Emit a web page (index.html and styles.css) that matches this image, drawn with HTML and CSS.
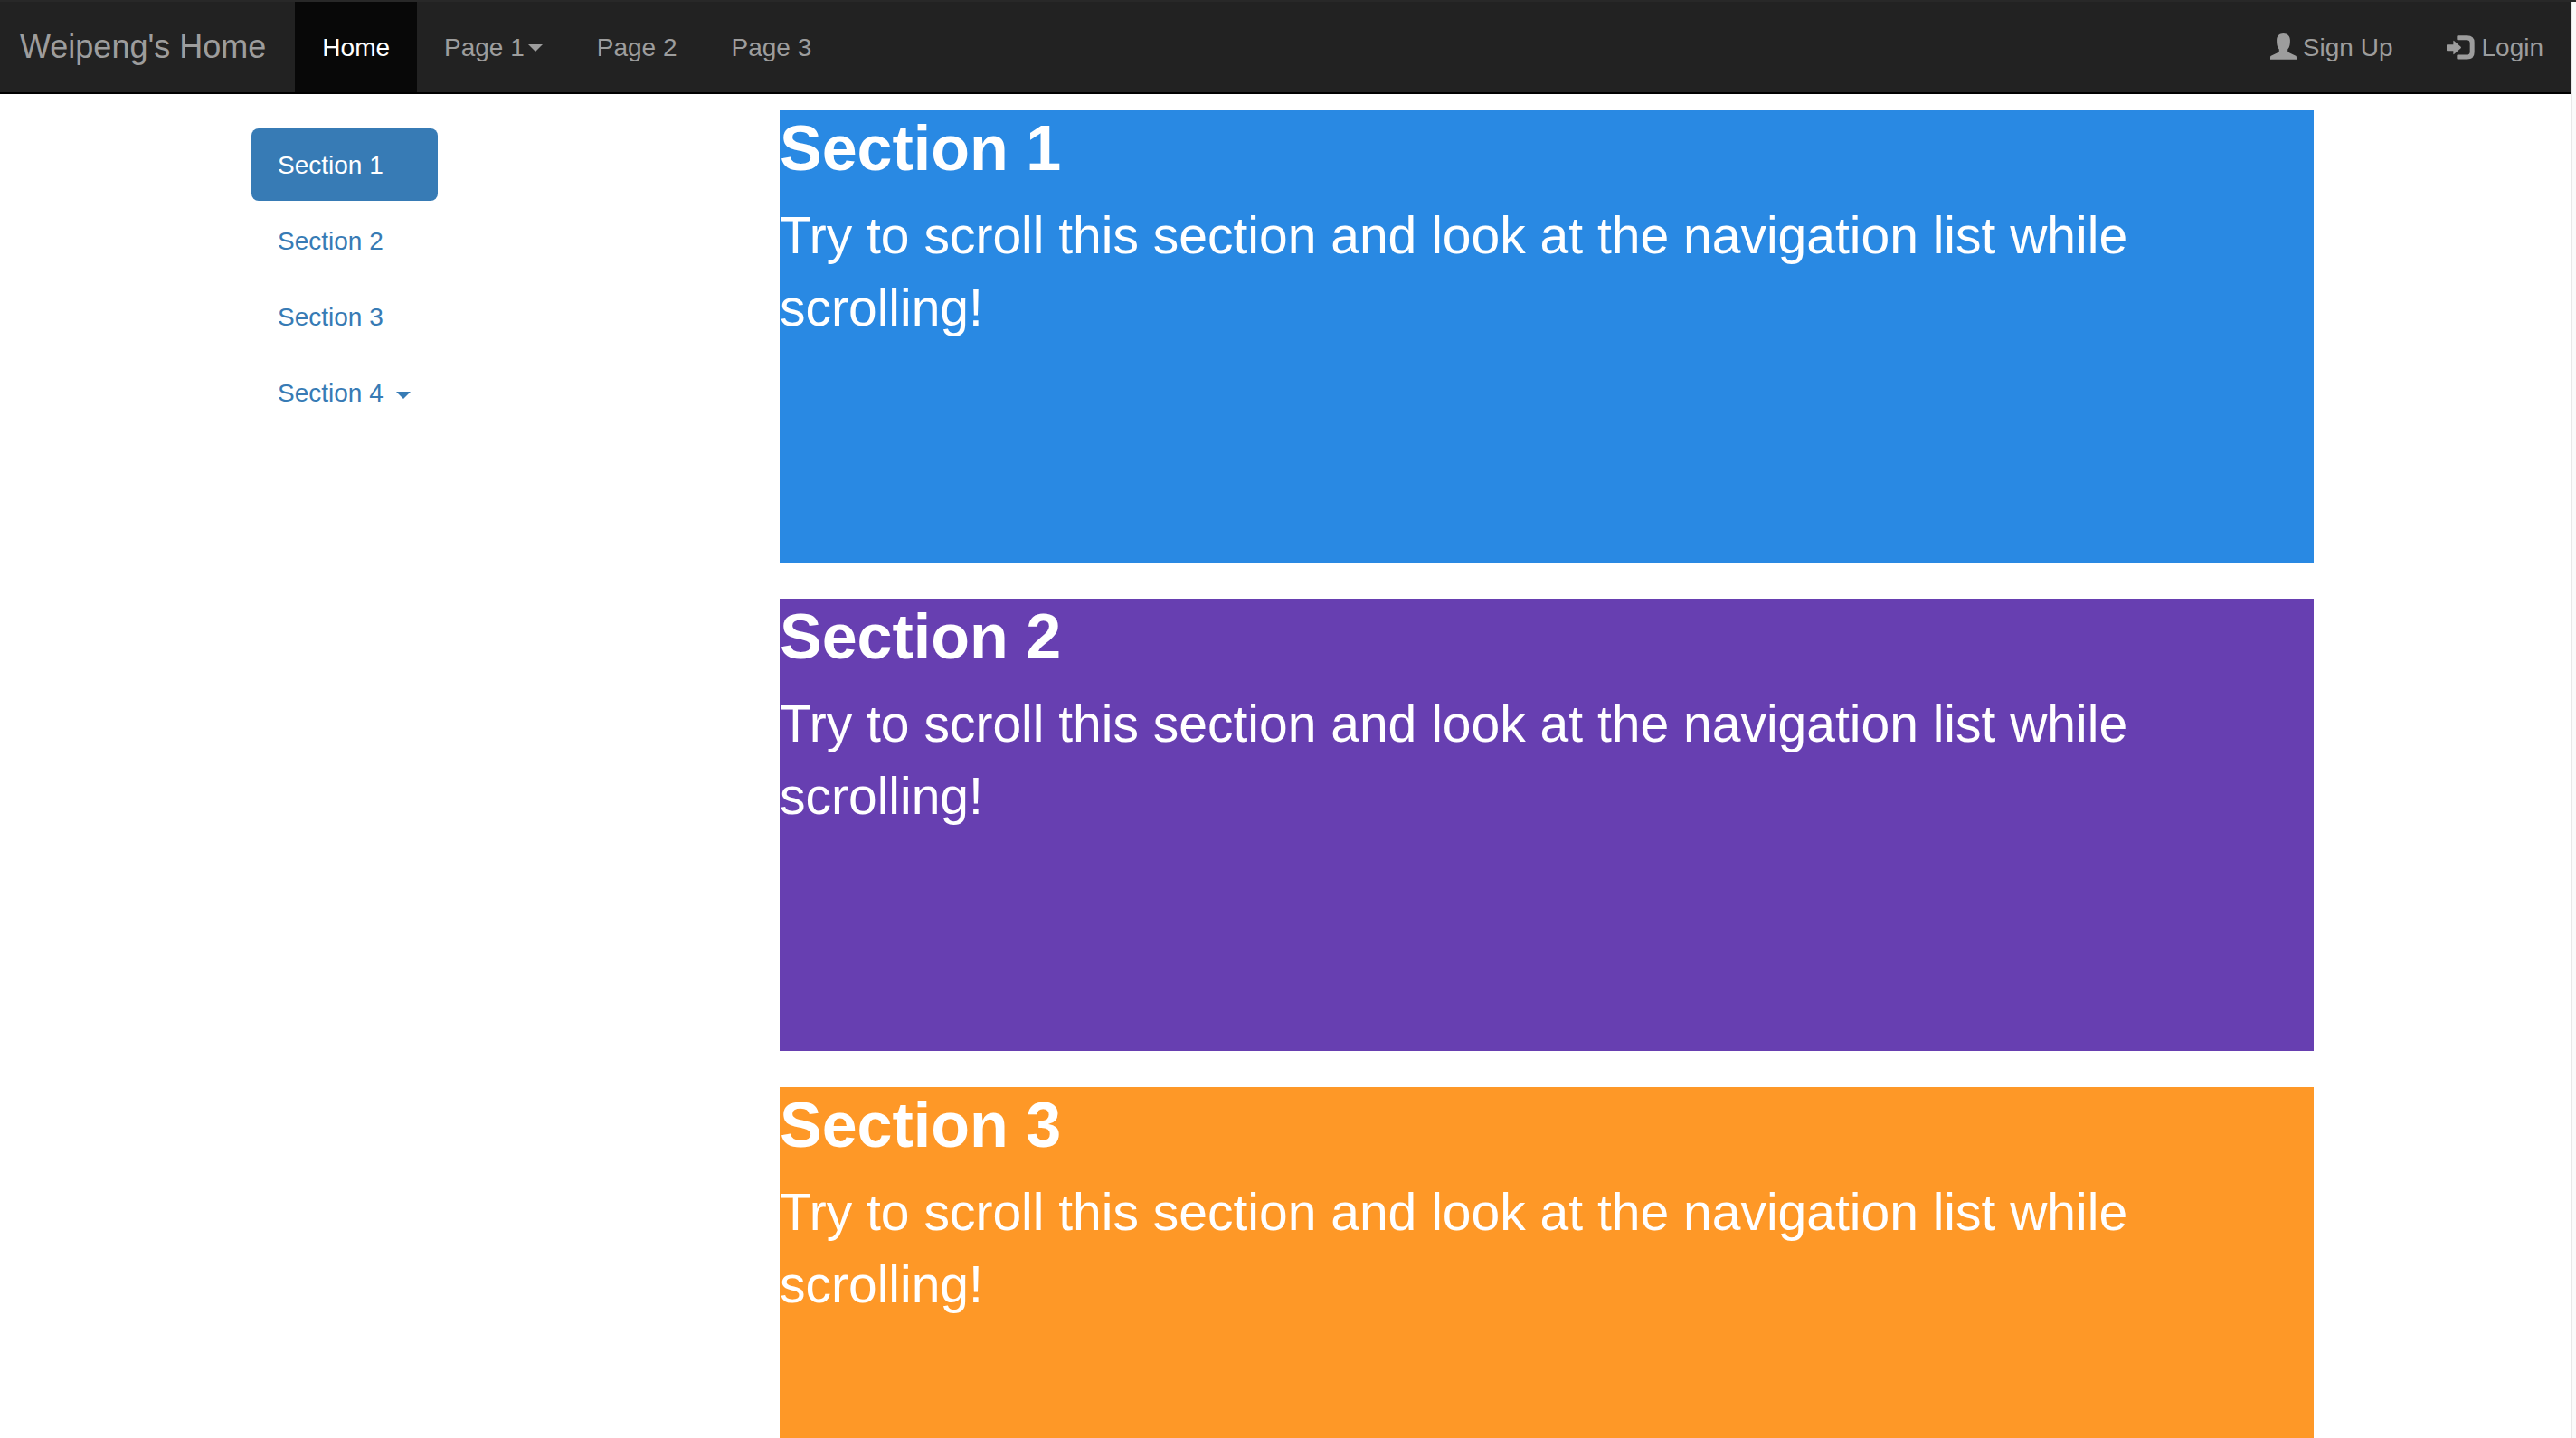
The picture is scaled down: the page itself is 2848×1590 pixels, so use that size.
FILE: index.html
```html
<!DOCTYPE html>
<html lang="en">
<head>
<meta charset="utf-8">
<meta name="viewport" content="width=device-width, initial-scale=1">
<title>Weipeng's Home</title>
<link rel="stylesheet" href="styles.css">
</head>
<body>
<div class="page">
  <header class="navbar">
    <a class="brand" href="#">Weipeng's Home</a>
    <nav class="menu" aria-label="Main">
      <a class="menu-link active" href="#">Home</a>
      <a class="menu-link" href="#">Page 1<span class="caret"></span></a>
      <a class="menu-link" href="#">Page 2</a>
      <a class="menu-link" href="#">Page 3</a>
    </nav>
    <nav class="menu account" aria-label="Account">
      <a class="menu-link with-icon" href="#">
        <svg class="icon user" viewBox="0 0 86 86" aria-hidden="true"><path d="M43 0C30 0 21 8 21 22c0 12 1 22 8 30v5c0 3-2 4-5 6L4 73c-3 1-4 3-4 6v6h86v-6c0-3-1-5-4-6L62 63c-3-2-5-3-5-6v-5c7-8 8-18 8-30C65 8 56 0 43 0z"/></svg>
        Sign Up</a>
      <a class="menu-link with-icon" href="#">
        <svg class="icon log-in" viewBox="0 0 93 80" aria-hidden="true"><path d="M2 30h20V19q0-4 3-1l22 20q2 2 0 4L25 62q-3 3-3-1V51H2q-2 0-2-2V32q0-2 2-2zM37 0h31q24 0 24 23v33q0 23-24 23H37q-3 0-3-3V67q0-3 3-3h29q11 0 11-10V25q0-10-11-10H37q-3 0-3-3V3q0-3 3-3z"/></svg>
        Login</a>
    </nav>
  </header>
  <div class="scroller">
    <div class="container">
      <nav class="pills" aria-label="Sections">
        <a class="pill current" href="#section1">Section 1</a>
        <a class="pill" href="#section2">Section 2</a>
        <a class="pill" href="#section3">Section 3</a>
        <a class="pill" href="#section4">Section 4 <span class="caret"></span></a>
      </nav>
      <main class="sections">
        <section id="section1" class="section blue">
          <h1>Section 1</h1>
          <p>Try to scroll this section and look at the navigation list while scrolling!</p>
        </section>
        <section id="section2" class="section purple">
          <h1>Section 2</h1>
          <p>Try to scroll this section and look at the navigation list while scrolling!</p>
        </section>
        <section id="section3" class="section orange">
          <h1>Section 3</h1>
          <p>Try to scroll this section and look at the navigation list while scrolling!</p>
        </section>
      </main>
    </div>
  </div>
</div>
<div class="gutter"></div>
</body>
</html>
```
FILE: styles.css
```css
* { box-sizing: border-box; }

body {
  margin: 0;
  height: 100vh;
  display: flex;
  border-top: 2px solid #282828;
  background: #fff;
  font-family: "Helvetica Neue", Helvetica, "Liberation Sans", Arial, sans-serif;
  font-size: 28px;
  line-height: 40px;
}

a { text-decoration: none; }

.page {
  flex: 1;
  min-width: 0;
  display: flex;
  flex-direction: column;
}

.gutter {
  width: 6px;
  border-left: 2px solid #e8e8e8;
  background: #fafafa;
}

.navbar {
  flex: none;
  display: flex;
  height: 102px;
  padding-left: 22px;
  background: #222;
  border-bottom: 2px solid #000;
}

.brand {
  padding: 30px 32px 30px 0;
  font-size: 36px;
  color: #9d9d9d;
}

.menu { display: flex; }
.account { margin-left: auto; }

.menu-link {
  display: flex;
  align-items: center;
  padding: 2px 30px 0;
  color: #9d9d9d;
}

.menu-link.active {
  color: #fff;
  background: #080808;
}

.with-icon { gap: 7px; }

.icon { fill: currentColor; }

.user {
  width: 29px;
  height: 29px;
  margin-bottom: 4px;
}

.log-in {
  width: 31px;
  height: 27px;
  margin-bottom: 2px;
}

.caret {
  display: inline-block;
  margin-left: 6px;
  vertical-align: middle;
  border-top: 8px solid;
  border-left: 8px solid transparent;
  border-right: 8px solid transparent;
}

.menu-link .caret { margin-left: 4px; }

.scroller {
  flex: 1;
  min-height: 0;
  padding-right: 6px;
  overflow-y: auto;
  scrollbar-width: none;
}

.container {
  max-width: 2340px;
  margin: 0 auto;
  display: grid;
  grid-template-columns: 1fr 3fr;
}

.pills {
  width: 266px;
  padding: 38px 30px;
  display: flex;
  flex-direction: column;
  gap: 4px;
}

.pill {
  padding: 21px 28px 19px 29px;
  border-radius: 8px;
  color: #377bb5;
  white-space: nowrap;
}

.pill.current {
  color: #fff;
  background: #377bb5;
}

.sections {
  padding: 18px 30px 0 29px;
  display: flex;
  flex-direction: column;
  gap: 40px;
}

.section {
  min-height: 500px;
  color: #fff;
}

.section h1 {
  margin: 0 0 14px;
  font-size: 70px;
  line-height: 84px;
}

.section p {
  margin: 0;
  font-size: 57px;
  line-height: 80px;
}

.blue { background: #2989e3; }
.purple { background: #673fb1; }
.orange { background: #fe9827; }
```
